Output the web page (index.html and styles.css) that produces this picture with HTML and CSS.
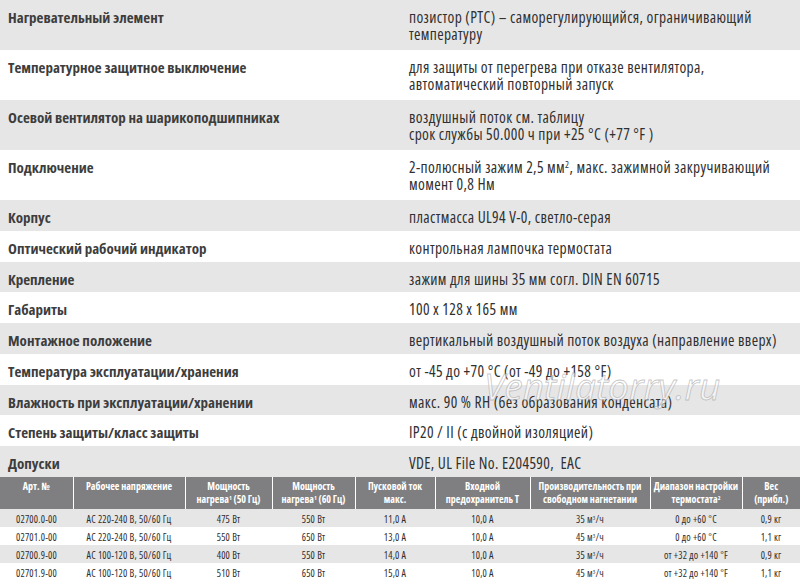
FILE: index.html
```html
<!DOCTYPE html>
<html lang="ru">
<head>
<meta charset="utf-8">
<title>Технические характеристики</title>
<link rel="stylesheet" href="styles.css">
</head>
<body>
<div class="sheet">
  <div class="spec">
    <div class="row shade tall"><div class="label">Нагревательный элемент</div><div class="value">позистор (PTC) – саморегулирующийся, ограничивающий<br>температуру</div></div>
    <div class="row tall"><div class="label">Температурное защитное выключение</div><div class="value">для защиты от перегрева при отказе вентилятора,<br>автоматический повторный запуск</div></div>
    <div class="row shade tall"><div class="label">Осевой вентилятор на шарикоподшипниках</div><div class="value">воздушный поток см. таблицу<br>срок службы 50.000 ч при +25 °C (+77 °F )</div></div>
    <div class="row tall"><div class="label">Подключение</div><div class="value">2-полюсный зажим 2,5 мм<sup>2</sup>, макс. зажимной закручивающий<br>момент 0,8 Нм</div></div>
    <div class="row shade"><div class="label">Корпус</div><div class="value">пластмасса UL94 V-0, светло-серая</div></div>
    <div class="row"><div class="label">Оптический рабочий индикатор</div><div class="value">контрольная лампочка термостата</div></div>
    <div class="row shade"><div class="label">Крепление</div><div class="value">зажим для шины 35 мм согл. DIN EN 60715</div></div>
    <div class="row"><div class="label">Габариты</div><div class="value">100 x 128 x 165 мм</div></div>
    <div class="row shade"><div class="label">Монтажное положение</div><div class="value">вертикальный воздушный поток воздуха (направление вверх)</div></div>
    <div class="row"><div class="label">Температура эксплуатации/хранения</div><div class="value">от -45 до +70 °C (от -49 до +158 °F)</div></div>
    <div class="row shade"><div class="label">Влажность при эксплуатации/хранении</div><div class="value">макс. 90 % RH (без образования конденсата)</div></div>
    <div class="row"><div class="label">Степень защиты/класс защиты</div><div class="value">IP20 / II (с двойной изоляцией)</div></div>
    <div class="row shade"><div class="label">Допуски</div><div class="value">VDE, UL File No. E204590,&nbsp; EAC</div></div>
  </div>

  <table class="models">
    <colgroup>
      <col class="c1"><col class="c2"><col class="c3"><col class="c4"><col class="c5"><col class="c6"><col class="c7"><col class="c8"><col class="c9">
    </colgroup>
    <thead>
      <tr>
        <th>Арт. №</th>
        <th>Рабочее напряжение</th>
        <th>Мощность<br>нагрева<sup>1</sup> (50 Гц)</th>
        <th>Мощность<br>нагрева<sup>1</sup> (60 Гц)</th>
        <th>Пусковой ток<br>макс.</th>
        <th>Входной<br>предохранитель T</th>
        <th>Производительность при<br>свободном нагнетании</th>
        <th>Диапазон настройки<br>термостата<sup>2</sup></th>
        <th>Вес<br>(прибл.)</th>
      </tr>
    </thead>
    <tbody>
      <tr class="shade"><td>02700.0-00</td><td>AC 220-240 В, 50/60 Гц</td><td>475 Вт</td><td>550 Вт</td><td>11,0 A</td><td>10,0 A</td><td>35 м<sup>3</sup>/ч</td><td>0 до +60 °C</td><td>0,9 кг</td></tr>
      <tr><td>02701.0-00</td><td>AC 220-240 В, 50/60 Гц</td><td>550 Вт</td><td>650 Вт</td><td>13,0 A</td><td>10,0 A</td><td>45 м<sup>3</sup>/ч</td><td>0 до +60 °C</td><td>1,1 кг</td></tr>
      <tr class="shade"><td>02700.9-00</td><td>AC 100-120 В, 50/60 Гц</td><td>400 Вт</td><td>550 Вт</td><td>14,0 A</td><td>10,0 A</td><td>35 м<sup>3</sup>/ч</td><td>от +32 до +140 °F</td><td>0,9 кг</td></tr>
      <tr><td>02701.9-00</td><td>AC 100-120 В, 50/60 Гц</td><td>510 Вт</td><td>650 Вт</td><td>15,0 A</td><td>10,0 A</td><td>45 м<sup>3</sup>/ч</td><td>от +32 до +140 °F</td><td>1,1 кг</td></tr>
    </tbody>
  </table>

  <div class="watermark">Ventilatorry.ru</div>
</div>
</body>
</html>
```

FILE: styles.css
```css
html, body {
  margin: 0;
  padding: 0;
  background: #ffffff;
}

body {
  font-family: "Open Sans", "DejaVu Sans Condensed", sans-serif;
  font-stretch: 75%;
  color: #404040;
}

.sheet {
  position: relative;
  width: 800px;
  overflow: hidden;
}

.spec {
  display: flex;
  flex-direction: column;
}

.row {
  display: grid;
  grid-template-columns: 401px 1fr;
  padding: 9px 0 4.75px;
  line-height: 17px;
}

.row.tall {
  padding-bottom: 7px;
}

.shade {
  background: #e6e6e7;
}

.label {
  padding-left: 8px;
  font-size: 15px;
  font-weight: 700;
  color: #3d3d3d;
  white-space: nowrap;
}

.value {
  padding-left: 8px;
  font-size: 15.5px;
  font-weight: 400;
  letter-spacing: 0.35px;
  color: #303030;
  white-space: nowrap;
}

sup {
  font-size: 0.6em;
  line-height: 0;
  vertical-align: 0.55em;
}

.models {
  width: 800px;
  border-collapse: collapse;
  table-layout: fixed;
}

.c1 { width: 73px; }
.c2 { width: 112px; }
.c3 { width: 87px; }
.c4 { width: 83px; }
.c5 { width: 80px; }
.c6 { width: 95px; }
.c7 { width: 120px; }
.c8 { width: 92px; }
.c9 { width: 58px; }

.models th {
  background: #7f7f81;
  color: #ffffff;
  font-size: 10px;
  font-weight: 700;
  line-height: 13px;
  height: 32px;
  padding: 3px 1px 0;
  box-sizing: border-box;
  vertical-align: top;
  text-align: center;
  white-space: nowrap;
  border-left: 1px solid #ffffff;
}

.models th:first-child {
  border-left: none;
}

.models td {
  height: 15.75px;
  padding: 2px 1px 0;
  font-size: 10px;
  font-weight: 400;
  line-height: 16px;
  letter-spacing: 0.2px;
  text-align: center;
  color: #2e2e2e;
  white-space: nowrap;
}

.watermark {
  position: absolute;
  left: 484px;
  top: 367px;
  font-size: 37px;
  line-height: 37px;
  font-stretch: 100%;
  font-weight: 400;
  font-style: italic;
  color: rgba(255, 255, 255, 0.55);
  -webkit-text-stroke: 0.8px rgba(160, 160, 160, 0.6);
  pointer-events: none;
}
```
